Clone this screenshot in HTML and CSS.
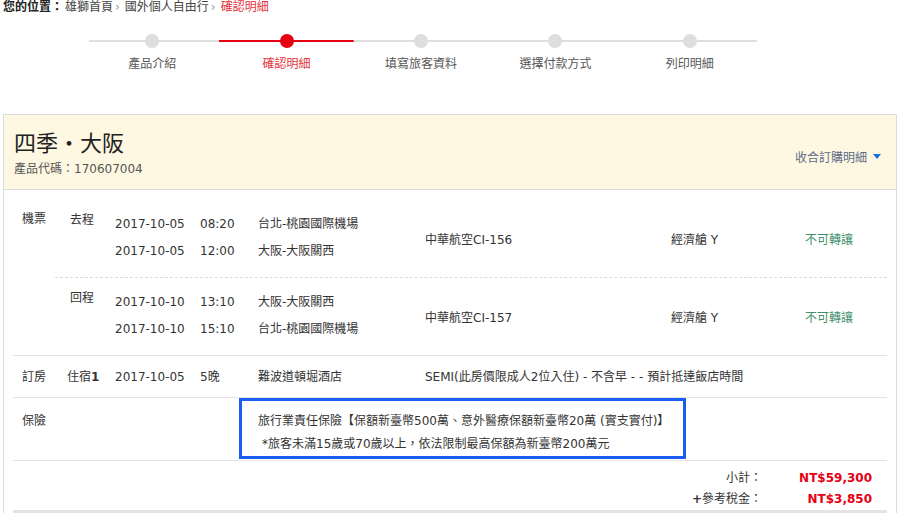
FILE: index.html
```html
<!DOCTYPE html>
<html lang="zh-Hant">
  <head>
    <meta charset="UTF-8" />
    <title>確認明細</title>
    <link rel="stylesheet" href="styles.css">
  </head>
  <body>
    <div class="page">
      <!-- 麵包屑 -->
      <div class="crumbs"><span class="crumb-title">您的位置：</span><a href="#">雄獅首頁</a><span class="sep">›</span><a href="#">國外個人自由行</a><span class="sep">›</span><span class="current">確認明細</span></div>

      <!-- 步驟 -->
      <div class="steps">
        <div class="step"><div class="track"><span class="dot"></span></div><span class="step-name">產品介紹</span></div>
        <div class="step active"><div class="track"><span class="dot"></span></div><span class="step-name">確認明細</span></div>
        <div class="step"><div class="track"><span class="dot"></span></div><span class="step-name">填寫旅客資料</span></div>
        <div class="step"><div class="track"><span class="dot"></span></div><span class="step-name">選擇付款方式</span></div>
        <div class="step"><div class="track"><span class="dot"></span></div><span class="step-name">列印明細</span></div>
      </div>

      <div class="order">
        <div class="order-head">
          <div>
            <h1>四季・大阪</h1>
            <div class="code">產品代碼：170607004</div>
          </div>
          <a class="toggle" href="#">收合訂購明細<span class="caret"></span></a>
        </div>

        <div class="detail">
          <!-- 機票 -->
          <div class="section flights">
            <div class="sec-label">機票</div>
            <div class="legs">
              <div class="leg">
                <div class="leg-name">去程</div>
                <div>
                  <div class="seg"><span>2017-10-05</span><span>08:20</span><span>台北-桃園國際機場</span></div>
                  <div class="seg"><span>2017-10-05</span><span>12:00</span><span>大阪-大阪關西</span></div>
                </div>
                <div>中華航空CI-156</div>
                <div>經濟艙 Y</div>
                <div class="status">不可轉讓</div>
              </div>
              <div class="leg">
                <div class="leg-name">回程</div>
                <div>
                  <div class="seg"><span>2017-10-10</span><span>13:10</span><span>大阪-大阪關西</span></div>
                  <div class="seg"><span>2017-10-10</span><span>15:10</span><span>台北-桃園國際機場</span></div>
                </div>
                <div>中華航空CI-157</div>
                <div>經濟艙 Y</div>
                <div class="status">不可轉讓</div>
              </div>
            </div>
          </div>

          <!-- 訂房 -->
          <div class="section hotel">
            <div class="sec-label">訂房</div>
            <div class="hotel-row">
              <span>住宿<b>1</b></span>
              <span>2017-10-05</span>
              <span>5晚</span>
              <span>難波道頓堀酒店</span>
              <span>SEMI(此房價限成人2位入住) - 不含早 - - 預計抵達飯店時間</span>
            </div>
          </div>

          <!-- 保險 -->
          <div class="section insurance">
            <div class="sec-label">保險</div>
            <div class="ins-box">
              <div>旅行業責任保險【保額新臺幣500萬、意外醫療保額新臺幣20萬 (實支實付)】</div>
              <div class="ins-note">*旅客未滿15歲或70歲以上，依法限制最高保額為新臺幣200萬元</div>
            </div>
          </div>

          <!-- 小計 -->
          <div class="totals">
            <span class="t-label">小計：</span><span class="t-value">NT$59,300</span>
            <span class="t-label"><b>+</b>參考稅金：</span><span class="t-value">NT$3,850</span>
          </div>
        </div>
      </div>
    </div>
  </body>
</html>
```

FILE: styles.css
```css
body {
  margin: 0;
  font-family: "DejaVu Sans", "Noto Sans CJK TC", sans-serif;
  font-size: 12px;
  color: #333;
  background: #fff;
}

a {
  color: inherit;
  text-decoration: none;
}

.page {
  margin: 0 3px;
}

/* 麵包屑 */
.crumbs {
  line-height: 15px;
  color: #444;
}

.crumb-title {
  color: #222;
  font-weight: bold;
  margin-right: 2px;
}

.sep {
  color: #999;
  margin: 0 5px 0 2px;
}

.current {
  color: #e5323a;
}

/* 步驟 */
.steps {
  display: flex;
  width: 672px;
  margin: 19px 0 0 82px;
}

.step {
  flex: 1;
  display: flex;
  flex-direction: column;
  align-items: center;
}

.track {
  align-self: stretch;
  display: flex;
  justify-content: center;
  background: linear-gradient(#dedede, #dedede) center / 100% 2px no-repeat;
}

.step:first-child .track {
  margin-left: 4px;
}

.dot {
  width: 14px;
  height: 14px;
  border-radius: 50%;
  background: #dedede;
}

.step:first-child .dot {
  margin-left: -4px;
}

.step-name {
  margin-top: 8px;
  line-height: 16px;
  font-size: 12px;
  color: #555;
}

.step.active .track {
  background-image: linear-gradient(#e60012, #e60012);
}

.step.active .dot {
  background: #e60012;
}

.step.active .step-name {
  color: #e5323a;
}

/* 訂單 */
.order {
  margin-top: 42px;
  border: 1px solid #dcdcdc;
  border-bottom: none;
}

.order-head {
  display: flex;
  justify-content: space-between;
  align-items: center;
  background: #fef8e2;
  border-bottom: 1px solid #dcdcdc;
  padding: 12px 15px 12px 10px;
}

.order-head h1 {
  margin: 0;
  font-family: "Noto Sans CJK TC", sans-serif;
  font-size: 22px;
  font-weight: normal;
  line-height: 28px;
  color: #222;
}

.code {
  margin-top: 6px;
  line-height: 16px;
  color: #555;
}

.toggle {
  display: flex;
  align-items: center;
  margin-top: 8px;
  color: #5d6b86;
}

.caret {
  margin-left: 6px;
  border-left: 4px solid transparent;
  border-right: 4px solid transparent;
  border-top: 5px solid #1a6fe0;
}

.detail {
  padding: 0 9px;
}

.section {
  display: flex;
  border-bottom: 1px solid #e4e4e4;
}

.sec-label {
  width: 42px;
  padding-left: 9px;
  box-sizing: border-box;
  flex-shrink: 0;
}

/* 機票 */
.flights {
  padding-top: 10px;
}

.flights .sec-label {
  margin-top: 10px;
  line-height: 18px;
}

.legs {
  flex: 1;
}

.leg {
  display: grid;
  grid-template-columns: 45px 310px 246px 134px 1fr;
  align-items: center;
  padding: 11px 0 12px 15px;
}

.leg + .leg {
  border-top: 1px dashed #dcdcdc;
}

.leg-name {
  align-self: start;
  line-height: 18px;
}

.seg {
  display: grid;
  grid-template-columns: 85px 58px 1fr;
  line-height: 27px;
}

.status {
  color: #3f8f6c;
}

/* 訂房 */
.hotel {
  padding: 13px 0 12px;
  line-height: 16px;
}

.hotel-row {
  flex: 1;
  display: grid;
  grid-template-columns: 48px 85px 58px 167px 1fr;
  padding-left: 12px;
}

/* 保險 */
.insurance {
  padding-bottom: 1px;
}

.insurance .sec-label {
  margin-top: 12px;
  line-height: 23px;
}

.ins-box {
  width: 447px;
  box-sizing: border-box;
  margin-left: 184px;
  border: 3px solid #1b5cf2;
  padding: 9px 0 0 16px;
  line-height: 23px;
}

.ins-note {
  padding-left: 4px;
}

/* 小計 */
.totals {
  display: grid;
  grid-template-columns: 1fr 110px;
  padding: 7px 15px 0 0;
  line-height: 21px;
  border-bottom: 3px solid #e4e4e4;
}

.t-label {
  text-align: right;
}

.t-value {
  text-align: right;
  color: #e60012;
  font-weight: bold;
}
```
